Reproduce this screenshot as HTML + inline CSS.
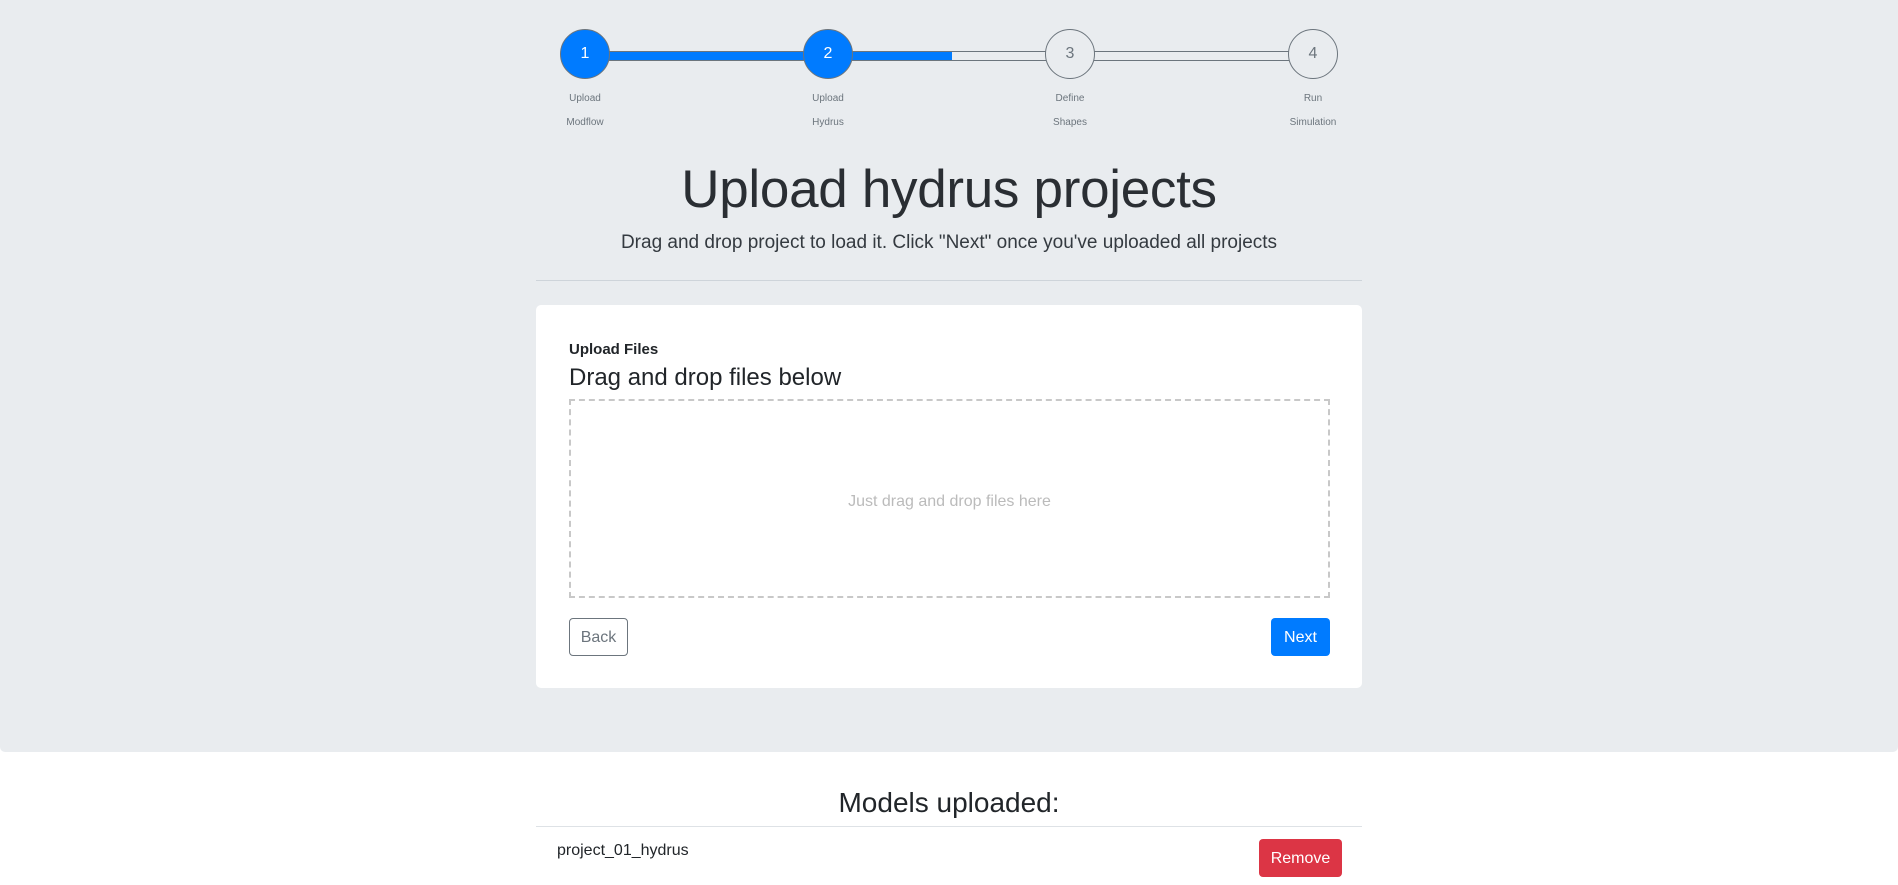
<!DOCTYPE html>
<html><head><meta charset="utf-8"><style>
*{box-sizing:border-box;margin:0;padding:0}
body{width:1898px;height:885px;overflow:hidden;background:#fff;font-family:"Liberation Sans",sans-serif;color:#212529;position:relative}
.gray{position:absolute;left:0;top:0;width:1898px;height:752px;background:#e9ecef;border-radius:0 0 5px 5px}
.abs{position:absolute}
.track{position:absolute;top:51px;height:10px;background:#e9ecef;border:1px solid #6c757d}
.fill{position:absolute;top:51px;height:10px;background:#007bff;border-top:1px solid #6c757d;border-bottom:1px solid #6c757d}
.c{position:absolute;top:29px;width:50px;height:50px;border-radius:50%;border:1px solid #6c757d;text-align:center;line-height:48px;font-size:16px;color:#6c757d;background:#e9ecef}
.c.a{background:#007bff;color:#fff}
.lbl{position:absolute;width:100px;text-align:center;font-size:10px;color:#6c757d;line-height:24px;top:87px}
</style></head><body>
<div class="gray"></div>
<div class="track" style="left:600px;width:700px"></div>
<div class="fill" style="left:600px;width:352px"></div>
<div class="c a" style="left:560px">1</div>
<div class="c a" style="left:803px">2</div>
<div class="c" style="left:1045px">3</div>
<div class="c" style="left:1288px">4</div>
<div class="lbl" style="left:535px">Upload<br>Modflow</div>
<div class="lbl" style="left:778px">Upload<br>Hydrus</div>
<div class="lbl" style="left:1020px">Define<br>Shapes</div>
<div class="lbl" style="left:1263px">Run<br>Simulation</div>
<div class="abs" style="left:536px;width:826px;top:155px;text-align:center;font-size:53px;line-height:70px;letter-spacing:-0.3px;color:#2a2e33">Upload hydrus projects</div>
<div class="abs" style="left:536px;width:826px;top:230px;text-align:center;font-size:19px;line-height:26px;color:#343a40">Drag and drop project to load it. Click "Next" once you've uploaded all projects</div>
<div class="abs" style="left:536px;width:826px;top:280px;height:1px;background:#ced4da"></div>
<div class="abs" style="left:536px;top:305px;width:826px;height:383px;background:#fff;border-radius:5px"></div>
<div class="abs" style="left:569px;top:341px;font-size:15px;font-weight:bold;line-height:18px">Upload Files</div>
<div class="abs" style="left:569px;top:363px;font-size:24px;line-height:30px">Drag and drop files below</div>
<div class="abs" style="left:569px;top:399px;width:761px;height:199px;border:2px dashed #c8c8c8;text-align:center;line-height:201px;font-size:16px;color:#bbb">Just drag and drop files here</div>
<div class="abs" style="left:569px;top:618px;width:59px;height:38px;border:1px solid #6c757d;border-radius:4px;color:#6c757d;font-size:16px;line-height:38px;text-align:center">Back</div>
<div class="abs" style="left:1271px;top:618px;width:59px;height:38px;background:#007bff;border-radius:4px;color:#fff;font-size:16px;line-height:40px;text-align:center">Next</div>
<div class="abs" style="left:536px;width:826px;top:785px;text-align:center;font-size:28px;line-height:36px">Models uploaded:</div>
<div class="abs" style="left:536px;width:826px;top:826px;height:1px;background:#dee2e6"></div>
<div class="abs" style="left:557px;top:841px;font-size:16px;line-height:20px">project_01_hydrus</div>
<div class="abs" style="left:1259px;top:839px;width:83px;height:38px;background:#dc3545;border-radius:4px;color:#fff;font-size:16px;line-height:40px;text-align:center">Remove</div>
</body></html>
